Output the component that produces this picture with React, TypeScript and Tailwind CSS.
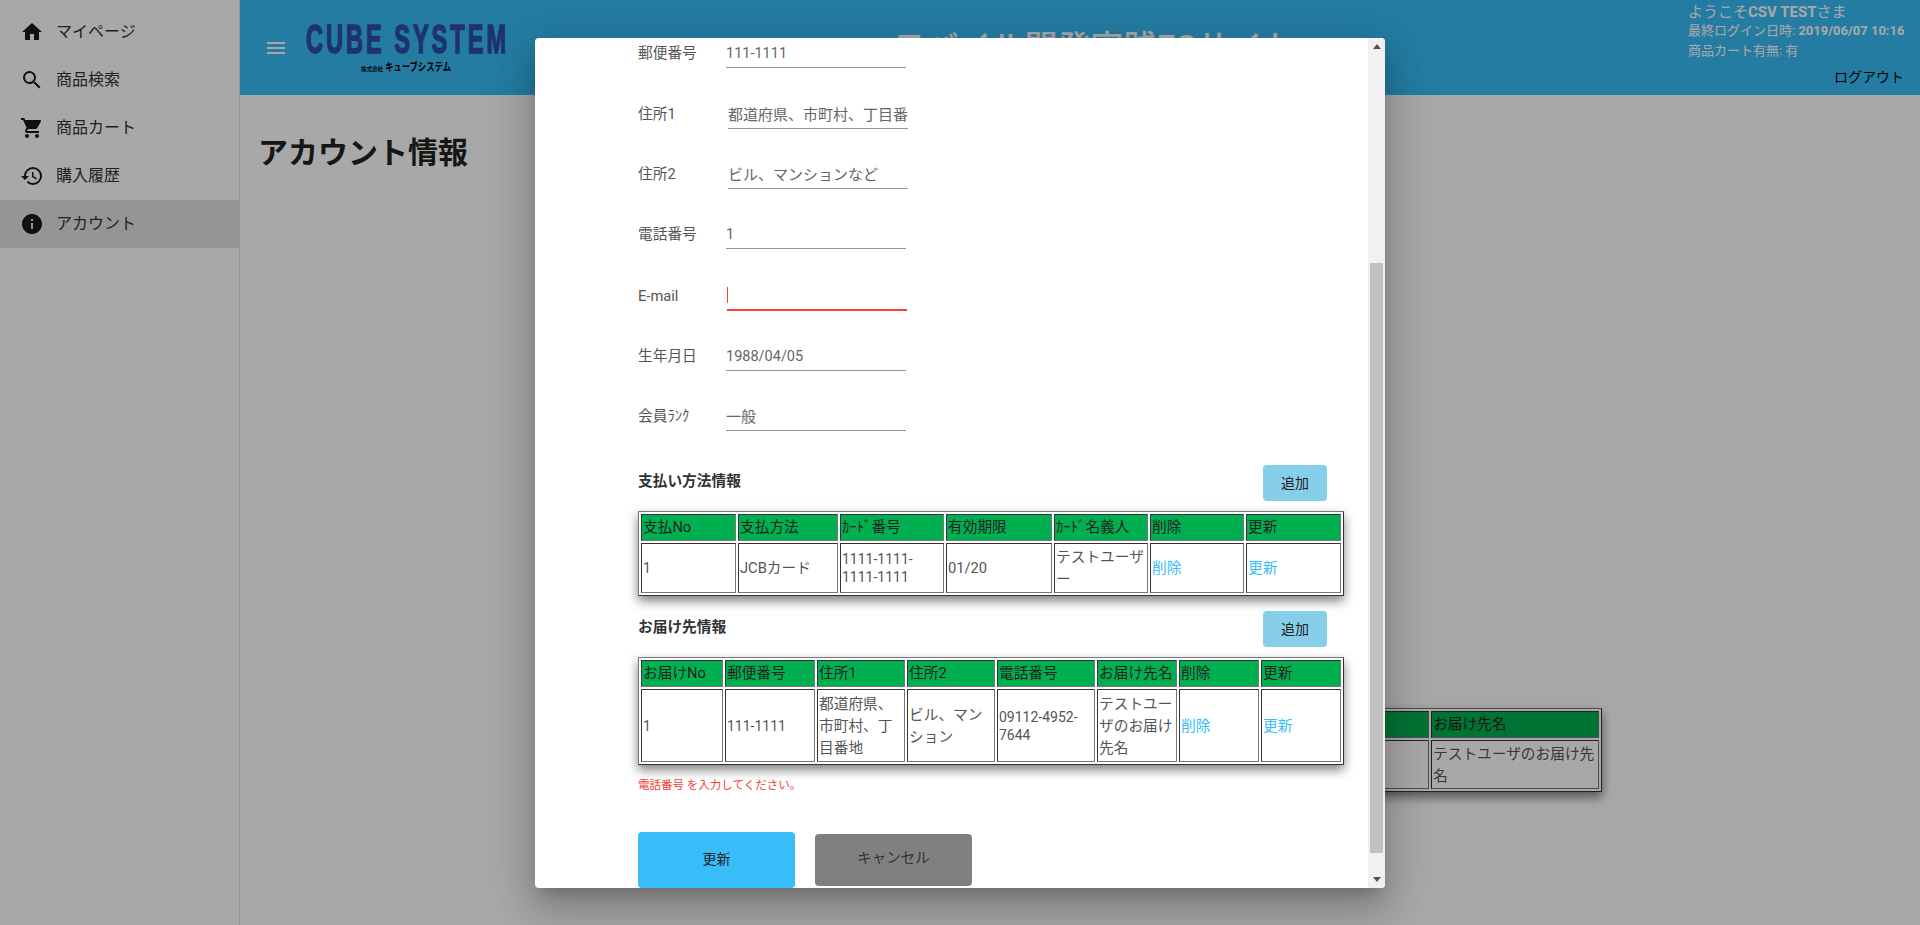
import { MdHistory, MdHome, MdInfo, MdMenu, MdSearch, MdShoppingCart } from "react-icons/md";

const font = "font-['Roboto','Noto_Sans_CJK_JP',sans-serif]";

const menuItems = [
  { label: "マイページ", icon: MdHome },
  { label: "商品検索", icon: MdSearch },
  { label: "商品カート", icon: MdShoppingCart },
  { label: "購入履歴", icon: MdHistory },
  { label: "アカウント", icon: MdInfo, active: true },
];

type Column = { title: string; width: number };
type Cell = string | { link: string };

function DataTable({ columns, row, bodyHeight, plain }: { columns: Column[]; row: Cell[]; bodyHeight: string; plain?: boolean }) {
  const total = columns.reduce((sum, c) => sum + c.width, 0) + (columns.length - 1) * 2 + 6;
  return (
    <table
      style={{ width: total }}
      className={`table-fixed border-separate border-spacing-[2px] border border-t-[#777] border-l-[#777] border-r-[#333] border-b-[#333] shadow-[0_5px_10px_rgba(0,0,0,0.5)] ${plain ? "" : "bg-white"}`}
    >
      <colgroup>
        {columns.map((c) => (
          <col key={c.title} style={{ width: c.width }} />
        ))}
      </colgroup>
      <thead>
        <tr className="h-[27px]">
          {columns.map((c) => (
            <th
              key={c.title}
              className="border border-t-[#333] border-l-[#333] border-r-[#777] border-b-[#777] bg-[#00b050] p-px text-left text-[14.7px] font-normal leading-[23px] whitespace-nowrap text-[#222]"
            >
              {c.title}
            </th>
          ))}
        </tr>
      </thead>
      <tbody>
        <tr className={bodyHeight}>
          {row.map((cell, i) => {
            // 数字だけのセルは少し小さく
            const numeric = typeof cell === "string" && /^[\d-]+$/.test(cell);
            return (
              <td
                key={i}
                className={`border border-t-[#333] border-l-[#333] border-r-[#777] border-b-[#777] p-px align-middle text-[#555] ${
                  numeric ? "text-sm leading-[18px]" : "text-[14.7px] leading-[22px]"
                }`}
              >
                {typeof cell === "string" ? cell : <a className="text-[#38bdf8]">{cell.link}</a>}
              </td>
            );
          })}
        </tr>
      </tbody>
    </table>
  );
}

function Field({ label, value, className, inputClass }: { label: string; value: string; className: string; inputClass: string }) {
  return (
    <div className={`flex h-[30px] items-center ${className}`}>
      <label className="w-[88px] shrink-0 text-[14.7px] text-[#555]">{label}</label>
      <input
        readOnly
        value={value}
        className={`h-[30px] w-[180px] border-b border-[#949494] text-[#666] outline-none ${inputClass}`}
      />
    </div>
  );
}

const paymentColumns: Column[] = [
  { title: "支払No", width: 95 },
  { title: "支払方法", width: 100 },
  { title: "ｶｰﾄﾞ番号", width: 104 },
  { title: "有効期限", width: 106 },
  { title: "ｶｰﾄﾞ名義人", width: 94 },
  { title: "削除", width: 94 },
  { title: "更新", width: 95 },
];

const shippingColumns: Column[] = [
  { title: "お届けNo", width: 82 },
  { title: "郵便番号", width: 90 },
  { title: "住所1", width: 88 },
  { title: "住所2", width: 88 },
  { title: "電話番号", width: 98 },
  { title: "お届け先名", width: 80 },
  { title: "削除", width: 80 },
  { title: "更新", width: 80 },
];

const backColumns: Column[] = [
  { title: "お届けNo", width: 60 },
  { title: "郵便番号", width: 80 },
  { title: "住所1", width: 100 },
  { title: "住所2", width: 100 },
  { title: "電話番号", width: 250 },
  { title: "お届け先名", width: 168 },
];

function Sidebar() {
  return (
    <aside className="w-[240px] shrink-0 border-r border-[#e4e4e4] bg-white pt-2">
      {menuItems.map((item) => {
        const Icon = item.icon;
        return (
          <div key={item.label} className={`flex h-12 items-center pl-5 ${item.active ? "bg-[#e2e2e2]" : ""}`}>
            <Icon size={24} className="shrink-0 text-[#1a1a1a]" />
            <span className="ml-[12px] text-base text-[#333]">{item.label}</span>
          </div>
        );
      })}
    </aside>
  );
}

function Header() {
  return (
    <header className="flex h-[95px] shrink-0 items-center bg-[#38bdf8] pl-6 text-white">
      <MdMenu size={24} className="shrink-0" />
      <svg width="210" height="48" viewBox="0 0 210 48" className="ml-[18px] shrink-0">
        <text
          x="0"
          y="29"
          textLength="203"
          lengthAdjust="spacingAndGlyphs"
          letterSpacing="5"
          fontFamily="Liberation Sans"
          fontWeight="700"
          fontSize="40"
          fill="#2f4daa"
          stroke="#2f4daa"
          strokeWidth="1.5"
        >
          CUBE SYSTEM
        </text>
        <text x="55" y="47" fontFamily="Noto Sans CJK JP" fontWeight="700" fontSize="5.5" fill="#000">
          株式会社
        </text>
        <text x="79" y="47" textLength="66" lengthAdjust="spacingAndGlyphs" fontFamily="Noto Sans CJK JP" fontWeight="700" fontSize="11" fill="#000">
          キューブシステム
        </text>
      </svg>
      <h2 className="flex-1 pr-[16px] text-center text-[33px] font-medium whitespace-nowrap">モバイル開発実践ECサイト</h2>
      <div className="flex h-full w-[232px] shrink-0 flex-col pr-4 whitespace-nowrap">
        <p className="mt-[2px] text-[15px] leading-5">
          ようこそ<b>CSV TEST</b>さま
        </p>
        <p className="text-[13px] leading-[18px]">
          最終ログイン日時: <b>2019/06/07 10:16</b>
        </p>
        <p className="mt-[2px] text-[13px] leading-[18px]">商品カート有無: 有</p>
        <button className="mt-[7px] self-end text-sm leading-5 text-black">ログアウト</button>
      </div>
    </header>
  );
}

export default function App() {
  return (
    <div className={`relative flex h-screen w-full overflow-hidden bg-white ${font}`}>
      <Sidebar />
      <div className="flex min-w-0 flex-1 flex-col">
        <Header />
        <main className="flex flex-1 flex-col">
          <h1 className="mt-[38px] pl-[18px] text-[30px] leading-10 font-bold text-[#222]">アカウント情報</h1>
          <div className="mt-[535px] mr-[318px] self-end">
            <DataTable
              plain
              columns={backColumns}
              bodyHeight="h-[49px]"
              row={["1", "111-1111", "都道府県", "ビル", "09112-4952-7644", "テストユーザのお届け先名"]}
            />
          </div>
        </main>
      </div>

      {/* モーダル */}
      <div className="absolute inset-0 flex items-center justify-center bg-[rgba(0,0,0,0.34)] pt-px">
        <div className="flex h-[850px] w-[850px] overflow-hidden rounded bg-white shadow-[0_11px_15px_-7px_rgba(0,0,0,0.2),0_24px_38px_3px_rgba(0,0,0,0.14),0_9px_46px_8px_rgba(0,0,0,0.12)]">
          <div className="min-w-0 flex-1 overflow-hidden pl-[103px]">
            <Field label="郵便番号" value="111-1111" className="" inputClass="pt-[2px] text-[14.5px]" />
            <Field label="住所1" value="都道府県、市町村、丁目番地" className="mt-[31px]" inputClass="ml-[2px] text-[15px]" />
            <Field label="住所2" value="ビル、マンションなど" className="mt-[30px]" inputClass="ml-[2px] text-[15px]" />
            <Field label="電話番号" value="1" className="mt-[30px]" inputClass="pt-[2px] text-[14.5px]" />
            <div className="mt-[32px] flex h-[30px] items-center">
              <label className="w-[88px] shrink-0 text-[14.7px] text-[#555]">E-mail</label>
              <div className="ml-px flex h-[30px] w-[180px] items-center border-b-2 border-[#f44336]">
                <span className="h-4 w-px bg-[#f44336]" />
              </div>
            </div>
            <Field label="生年月日" value="1988/04/05" className="mt-[30px]" inputClass="pt-[2px] text-[14.5px]" />
            <Field label="会員ﾗﾝｸ" value="一般" className="mt-[30px]" inputClass="text-[15px]" />

            <div className="mt-[34px] flex h-9 w-[689px] items-center justify-between">
              <h3 className="pb-[3px] text-[14.7px] font-bold text-[#333]">支払い方法情報</h3>
              <button className="h-9 w-16 rounded bg-[#87ceeb] text-sm text-[#222]">追加</button>
            </div>
            <div className="mt-[10px]">
              <DataTable
                columns={paymentColumns}
                bodyHeight="h-[50px]"
                row={["1", "JCBカード", "1111-1111-1111-1111", "01/20", "テストユーザー", { link: "削除" }, { link: "更新" }]}
              />
            </div>

            <div className="mt-[15px] flex h-9 w-[689px] items-center justify-between">
              <h3 className="pb-[3px] text-[14.7px] font-bold text-[#333]">お届け先情報</h3>
              <button className="h-9 w-16 rounded bg-[#87ceeb] text-sm text-[#222]">追加</button>
            </div>
            <div className="mt-[10px]">
              <DataTable
                columns={shippingColumns}
                bodyHeight="h-[73px]"
                row={[
                  "1",
                  "111-1111",
                  "都道府県、市町村、丁目番地",
                  "ビル、マンション",
                  "09112-4952-7644",
                  "テストユーザのお届け先名",
                  { link: "削除" },
                  { link: "更新" },
                ]}
              />
            </div>

            <p className="mt-3 text-[11.5px] leading-4 text-[#f44336]">電話番号 を入力してください。</p>

            <div className="mt-[39px] flex items-center gap-5">
              <button className="h-14 w-[157px] rounded bg-[#38bdf8] pb-[2px] text-sm text-[#222]">更新</button>
              <button className="h-[52px] w-[157px] rounded bg-[#808080] pb-[2px] text-[14.5px] text-[#333]">キャンセル</button>
            </div>
          </div>

          {/* スクロールバー */}
          <div className="flex w-[17px] shrink-0 flex-col bg-[#f1f1f1]">
            <div className="flex h-[17px] shrink-0 items-center justify-center">
              <span className="border-x-[4px] border-b-[5px] border-x-transparent border-b-[#505050]" />
            </div>
            <div className="mt-[208px] mx-[2px] h-[590px] bg-[#c1c1c1]" />
            <div className="mt-auto flex h-[17px] shrink-0 items-center justify-center">
              <span className="border-x-[4px] border-t-[5px] border-x-transparent border-t-[#505050]" />
            </div>
          </div>
        </div>
      </div>
    </div>
  );
}
